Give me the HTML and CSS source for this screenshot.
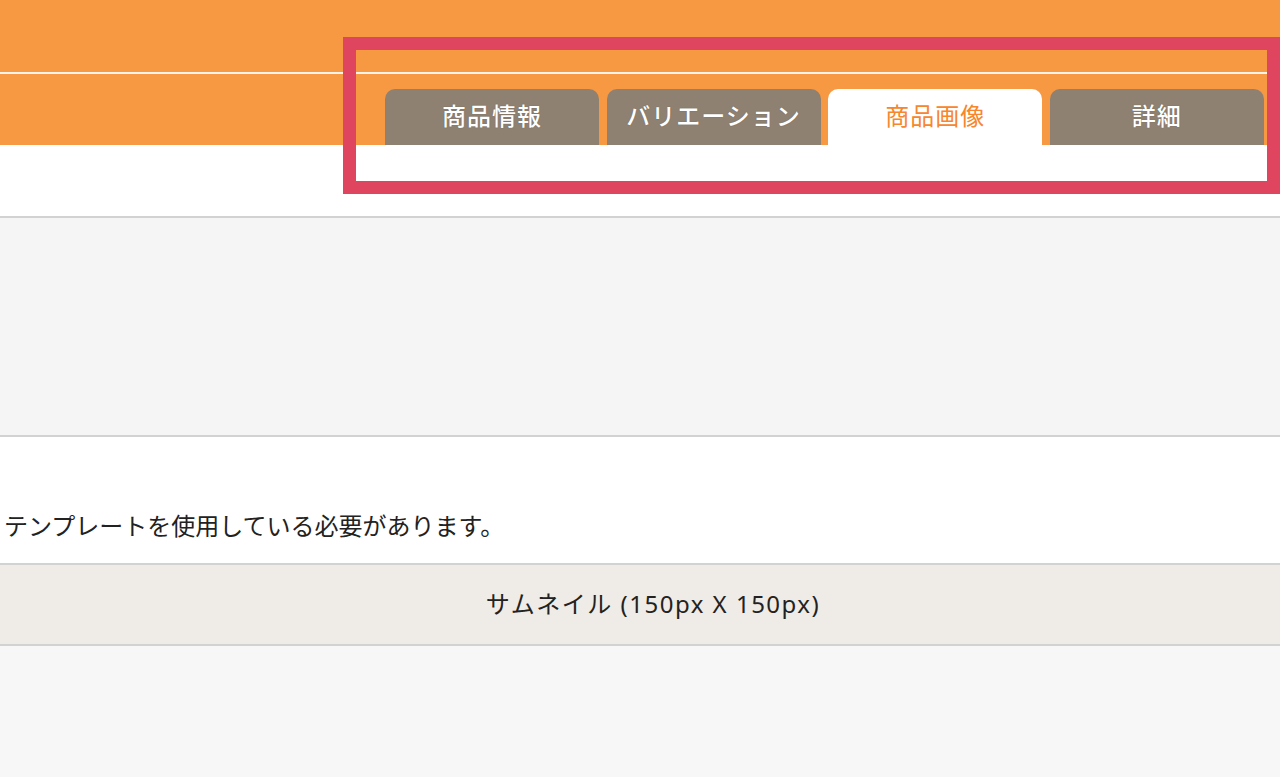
FILE: index.html
```html
<!DOCTYPE html>
<html lang="ja">
<head>
    <meta charset="UTF-8">
    <meta name="viewport" content="width=device-width, initial-scale=1.0">
    <title>商品画像</title>
    <link rel="stylesheet" href="styles.css">
</head>
<body>
    <header class="header">
        <div class="header-top"></div>
        <nav class="tabs">
            <a class="tab" href="#">商品情報</a>
            <a class="tab" href="#">バリエーション</a>
            <a class="tab active" href="#">商品画像</a>
            <a class="tab" href="#">詳細</a>
        </nav>
    </header>

    <div class="spacer"></div>
    <section class="panel-gray"></section>

    <section class="notice">
        <p>テンプレートを使用している必要があります。</p>
    </section>

    <div class="table-head">サムネイル (150px X 150px)</div>
    <section class="table-body"></section>

    <!-- annotation frame over the tabs -->
    <div class="highlight"></div>
</body>
</html>
```

FILE: styles.css
```css
body {
    margin: 0;
    font-family: "Noto Sans CJK JP", "Noto Sans", sans-serif;
    color: #222;
    background-color: #f7f7f7;
    position: relative;
    min-height: 777px;
    overflow: hidden;
}
.header {
    background-color: #f79942;
}
.header-top {
    height: 72px;
    border-bottom: 2px solid #fdf3ea;
}
.tabs {
    display: flex;
    gap: 7.6px;
    padding: 15px 0 0 385px;
}
.tab {
    width: 214px;
    height: 56px;
    box-sizing: border-box;
    padding-bottom: 5px;
    display: flex;
    align-items: center;
    justify-content: center;
    background-color: #8f8171;
    color: #fff;
    border-radius: 10px 10px 0 0;
    font-size: 24px;
    font-weight: 500;
    letter-spacing: 1px;
    text-decoration: none;
    text-shadow: 0 0 1px rgba(0, 0, 0, 0.35);
}
.tab.active {
    background-color: #fff;
    color: #f7862c;
    font-weight: 400;
    text-shadow: none;
}
.spacer {
    height: 71px;
    background-color: #fff;
    border-bottom: 2px solid #d2d2d2;
}
.panel-gray {
    height: 217px;
    background-color: #f5f5f5;
    border-bottom: 2px solid #d2d2d2;
}
.notice {
    height: 126px;
    background-color: #fff;
    border-bottom: 2px solid #d2d2d2;
    display: flex;
    align-items: flex-end;
}
.notice p {
    margin: 0 0 22px 4px;
    font-size: 24px;
    line-height: 32px;
}
.table-head {
    height: 81px;
    box-sizing: border-box;
    padding: 0 0 5px 26px;
    background-color: #efebe6;
    border-bottom: 2px solid #d2d2d2;
    display: flex;
    align-items: center;
    justify-content: center;
    font-family: "Noto Sans", "Noto Sans CJK JP", sans-serif;
    font-size: 24px;
    letter-spacing: 1.5px;
}
.table-body {
    height: 140px;
    background-color: #f7f7f7;
}
.highlight {
    position: absolute;
    left: 343px;
    top: 37px;
    width: 937px;
    height: 157px;
    box-sizing: border-box;
    border: 13px solid #df455f;
}
```
